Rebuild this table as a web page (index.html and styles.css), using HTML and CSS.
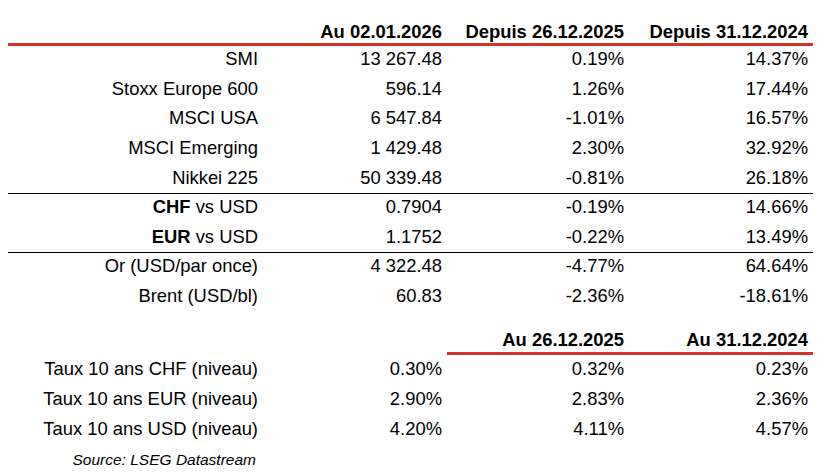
FILE: index.html
```html
<!DOCTYPE html>
<html lang="fr">
<head>
<meta charset="utf-8">
<title>Marchés</title>
<link rel="stylesheet" href="styles.css">
</head>
<body>
<div class="sheet">
  <div class="row head">
    <div></div><div>Au 02.01.2026</div><div>Depuis 26.12.2025</div><div>Depuis 31.12.2024</div>
  </div>
  <div class="row"><div>SMI</div><div>13 267.48</div><div>0.19%</div><div>14.37%</div></div>
  <div class="row"><div>Stoxx Europe 600</div><div>596.14</div><div>1.26%</div><div>17.44%</div></div>
  <div class="row"><div>MSCI USA</div><div>6 547.84</div><div>-1.01%</div><div>16.57%</div></div>
  <div class="row"><div>MSCI Emerging</div><div>1 429.48</div><div>2.30%</div><div>32.92%</div></div>
  <div class="row sep"><div>Nikkei 225</div><div>50 339.48</div><div>-0.81%</div><div>26.18%</div></div>
  <div class="row"><div><b>CHF</b> vs USD</div><div>0.7904</div><div>-0.19%</div><div>14.66%</div></div>
  <div class="row sep"><div><b>EUR</b> vs USD</div><div>1.1752</div><div>-0.22%</div><div>13.49%</div></div>
  <div class="row"><div>Or (USD/par once)</div><div>4 322.48</div><div>-4.77%</div><div>64.64%</div></div>
  <div class="row"><div>Brent (USD/bl)</div><div>60.83</div><div>-2.36%</div><div>-18.61%</div></div>
  <div class="row head2">
    <div></div><div></div><div class="redline">Au 26.12.2025</div><div class="redline">Au 31.12.2024</div>
  </div>
  <div class="row rate"><div>Taux 10 ans CHF (niveau)</div><div>0.30%</div><div>0.32%</div><div>0.23%</div></div>
  <div class="row rate"><div>Taux 10 ans EUR (niveau)</div><div>2.90%</div><div>2.83%</div><div>2.36%</div></div>
  <div class="row rate"><div>Taux 10 ans USD (niveau)</div><div>4.20%</div><div>4.11%</div><div>4.57%</div></div>
  <div class="source">Source: LSEG Datastream</div>
</div>
</body>
</html>
```
FILE: styles.css
```css
* { box-sizing: border-box; }
html, body { margin: 0; padding: 0; background: #fff; }
body {
  font-family: "Liberation Sans", Arial, sans-serif;
  font-size: 18.4px;
  color: #000;
}
.sheet {
  margin-left: 8px;
  width: 805px;
}
.row {
  display: grid;
  grid-template-columns: 255px 184px 182px 184px;
  height: 29.65px;
  line-height: 25.2px;
}
.row > div {
  text-align: right;
  padding-right: 5px;
  white-space: nowrap;
}
.row b { font-weight: bold; }
.sep { box-shadow: inset 0 -1px 0 #000; }
.head {
  height: 46px;
  align-items: end;
  font-weight: bold;
  line-height: 20.5px;
  padding-bottom: 1px;
  border-bottom: 3px solid #d0342c;
}
.head2 {
  height: 42.15px;
  align-items: end;
  font-weight: bold;
  line-height: 20.5px;
}
.head2 .redline {
  padding-bottom: 1px;
  border-bottom: 3px solid #d0342c;
}
.rate {
  height: 30px;
  line-height: 27px;
}
.source {
  width: 255px;
  padding-right: 7px;
  text-align: right;
  font-style: italic;
  font-size: 15.5px;
  line-height: 29px;
}
```
